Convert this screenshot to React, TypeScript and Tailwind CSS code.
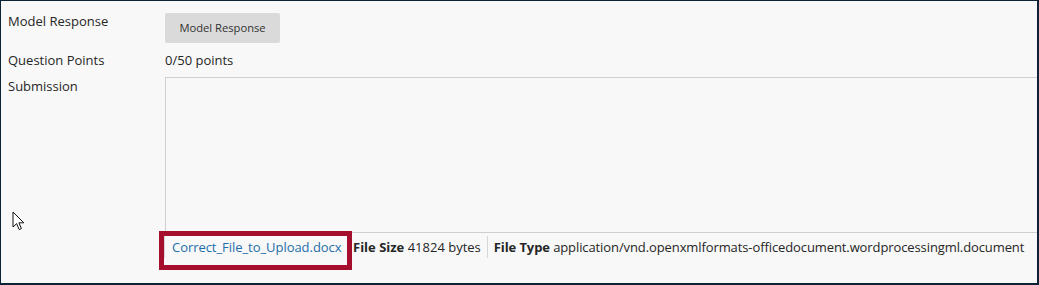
import React from 'react';

function Cursor() {
  return (
    <svg
      className="absolute left-[11px] top-[210px]"
      width="14"
      height="21"
      viewBox="0 0 14 21"
    >
      <path
        d="M1 1 L1 16 L4.6 12.6 L7.2 18.6 L9.4 17.6 L6.9 11.8 L11.8 11.8 Z"
        fill="#fff"
        stroke="#111"
        strokeWidth="1"
        strokeLinejoin="round"
      />
    </svg>
  );
}

export default function App() {
  return (
    <div className="relative h-[285px] w-[1039px] overflow-hidden border-t border-l border-r-2 border-b-2 border-[#0e2236] bg-[#f8f8f8] font-['Open_Sans',sans-serif] text-[13px] leading-[18px] text-[#262626]">
      {/* Model response */}
      <div className="flex items-start pl-[7px] pt-[11px]">
        <div className="w-[157px]">Model Response</div>
        <button className="mt-[1px] h-[30px] w-[115px] rounded-[2px] bg-[#dadada] text-[11.2px] text-[#333]">
          Model Response
        </button>
      </div>

      {/* Points */}
      <div className="mt-[8px] flex pl-[7px]">
        <div className="w-[157px]">Question Points</div>
        <div>0/50 points</div>
      </div>

      {/* Submission */}
      <div className="mt-[8px] flex pl-[7px]">
        <div className="w-[157px] shrink-0">Submission</div>
        <div className="flex-1">
          <div className="-mr-[20px] h-[156px] border-t border-l border-b border-[#cfcfcf] bg-[#f8f8f8]" />
          <div className="flex items-start whitespace-nowrap">
            <div className="mt-[3px] h-[29px] w-[183px] -ml-px outline-[5px] outline-solid outline-[#a50e2d]">
              <span className="block h-[22px] border-l border-[#d6d6d6] pl-[7px] leading-[22px] tracking-[-0.05px] text-[#1f6ea8]">
                Correct_File_to_Upload.docx
              </span>
            </div>
            <div className="mt-[3px] ml-[6px] h-[22px] border-r border-[#d6d6d6] pr-[6px] leading-[22px]">
              <span className="font-bold">File Size</span> 41824 bytes
            </div>
            <div className="mt-[3px] pl-[6px] leading-[22px] tracking-[-0.1px]">
              <span className="font-bold">File Type</span> application/vnd.openxmlformats-officedocument.wordprocessingml.document
            </div>
          </div>
        </div>
      </div>

      <Cursor />
    </div>
  );
}
